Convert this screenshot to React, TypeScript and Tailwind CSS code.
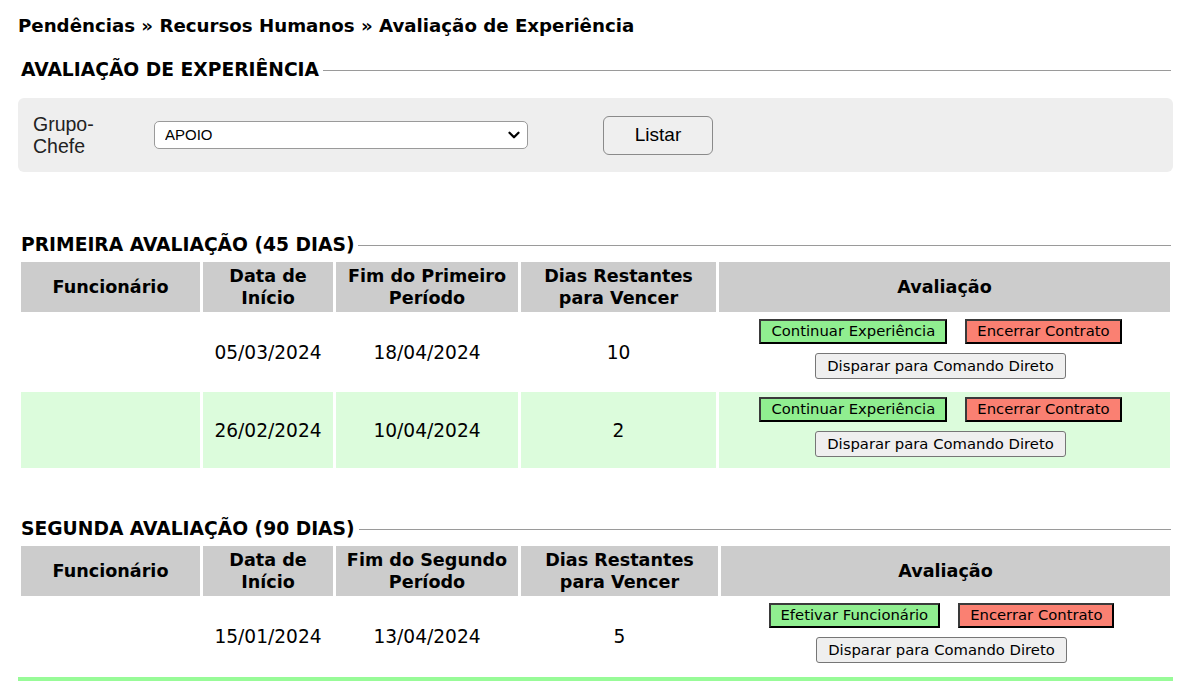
import { ChevronDown } from 'lucide-react';

type Row = { inicio: string; fim: string; dias: string; green?: boolean };

const primeira: Row[] = [
  { inicio: '05/03/2024', fim: '18/04/2024', dias: '10' },
  { inicio: '26/02/2024', fim: '10/04/2024', dias: '2', green: true },
];

const segunda: Row[] = [{ inicio: '15/01/2024', fim: '13/04/2024', dias: '5' }];

const SectionTitle = ({ label }: { label: string }) => (
  <div className="flex items-center pl-[3px] pr-[2px]">
    <h2 className="text-[18.7px] leading-[22px] font-bold text-black uppercase whitespace-nowrap">{label}</h2>
    <div className="flex-1 h-px bg-[#9a9a9a] ml-[4px]" />
  </div>
);

const ActionButtons = ({ first }: { first: string }) => (
  <div className="flex flex-col items-center gap-[9px] pr-[8px] pb-[6px]">
    <div className="flex items-center gap-[18px]">
      <button className="h-[25px] px-[10px] bg-[#90ee90] border-2 border-[#3a3a3a] border-r-black border-b-black text-[14.8px] leading-none text-black">
        {first}
      </button>
      <button className="h-[25px] px-[10px] bg-[#fa8072] border-2 border-[#3a3a3a] border-r-black border-b-black text-[14.8px] leading-none text-black">
        Encerrar Contrato
      </button>
    </div>
    <button className="h-[26px] px-[11px] bg-[#efefef] border border-[#767676] rounded-[3px] text-[14.8px] leading-none text-black">
      Disparar para Comando Direto
    </button>
  </div>
);

const Tabela = ({ fimLabel, rows, first, diasW }: { fimLabel: string; rows: Row[]; first: string; diasW: string }) => (
  <table className="w-full table-fixed border-separate [border-spacing:3px_2px] text-[17.6px] text-black">
    <thead>
      <tr className="h-[50px]">
        <th className="w-[179px] bg-[#cccccc] font-bold leading-[22px]">Funcionário</th>
        <th className="w-[130px] bg-[#cccccc] font-bold leading-[22px]">Data de<br />Início</th>
        <th className="w-[182px] bg-[#cccccc] font-bold leading-[22px]">Fim do {fimLabel}<br />Período</th>
        <th className={`${diasW} bg-[#cccccc] font-bold leading-[22px]`}>Dias Restantes<br />para Vencer</th>
        <th className="bg-[#cccccc] font-bold leading-[22px]">Avaliação</th>
      </tr>
    </thead>
    <tbody>
      {rows.map((r, i) => {
        const bg = r.green ? 'bg-[#dcfcdc]' : 'bg-white';
        return (
          <tr key={i} className="h-[76px] text-[18.6px]">
            <td className={bg}></td>
            <td className={`${bg} text-center pt-[2px]`}>{r.inicio}</td>
            <td className={`${bg} text-center pt-[2px]`}>{r.fim}</td>
            <td className={`${bg} text-center pt-[2px]`}>{r.dias}</td>
            <td className={`${bg} text-center`}>
              <ActionButtons first={first} />
            </td>
          </tr>
        );
      })}
    </tbody>
  </table>
);

export default function App() {
  return (
    <div className="w-[1197px] h-[687px] overflow-hidden bg-white font-['DejaVu_Sans',Verdana,sans-serif] pl-[18px] pr-[24px] pt-[15px]">
      <h1 className="text-[18.2px] leading-[22px] font-bold text-black">
        Pendências » Recursos Humanos » Avaliação de Experiência
      </h1>

      <div className="mt-[22px]">
        <SectionTitle label="Avaliação de Experiência" />
      </div>

      <div className="mt-[17px] h-[74px] bg-[#eeeeee] rounded-[6px] flex items-center pl-[15px] font-['Liberation_Sans',Arial,sans-serif]">
        <label className="w-[121px] text-[19.5px] leading-[22px] text-[#222]">
          Grupo-<br />Chefe
        </label>
        <div className="relative w-[374px] h-[28px]">
          <select className="appearance-none w-full h-full bg-white border border-[#9a9a9a] rounded-[5px] pl-[10px] text-[15px] text-black outline-none">
            <option>APOIO</option>
          </select>
          <ChevronDown className="absolute right-[5px] top-[5px] w-[18px] h-[18px] text-black pointer-events-none" strokeWidth={3} />
        </div>
        <button className="ml-[75px] w-[110px] h-[39px] bg-[#efefef] border border-[#8a8a8a] rounded-[6px] text-[19px] text-black">
          Listar
        </button>
      </div>

      <div className="mt-[62px] mb-[4px]">
        <SectionTitle label="Primeira Avaliação (45 dias)" />
      </div>
      <Tabela fimLabel="Primeiro" rows={primeira} first="Continuar Experiência" diasW="w-[195px]" />

      <div className="mt-[48px] mb-[4px]">
        <SectionTitle label="Segunda Avaliação (90 dias)" />
      </div>
      <Tabela fimLabel="Segundo" rows={segunda} first="Efetivar Funcionário" diasW="w-[197px]" />
      <div className="mt-px h-[4px] bg-[#98fb98]" />
    </div>
  );
}
